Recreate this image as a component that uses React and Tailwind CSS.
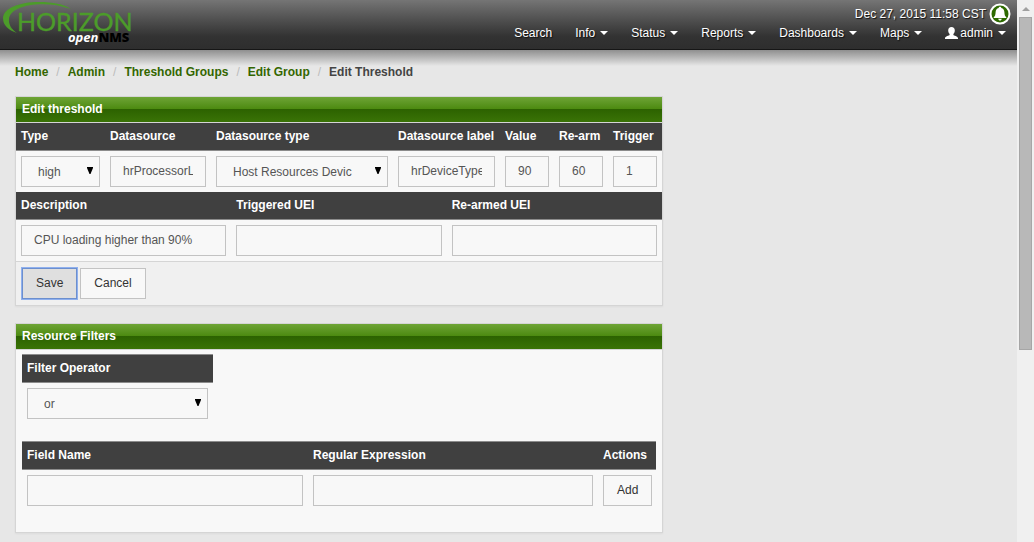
import { useState } from 'react';

const menuItems = ['Info', 'Status', 'Reports', 'Dashboards', 'Maps'];

const breadcrumbs = ['Home', 'Admin', 'Threshold Groups', 'Edit Group'];

const thClass = 'h-7 border-b border-[#8c8c8c] bg-[#404040] px-[5px] pb-px text-left font-bold whitespace-nowrap text-white';
const fieldClass = 'block h-[31px] w-full border border-[#c3c3c3] bg-[#f8f8f8] text-[#555] outline-none';
const buttonClass = 'h-[31px] border border-[#c3c3c3] bg-[#f8f8f8] px-[13px] pb-0.5 text-[#333]';

function Logo() {
  return (
    <svg width="134" height="48" viewBox="0 0 134 48" role="img" aria-label="Horizon openNMS">
      <path
        d="M17 33 C8 30 3 25 3 18 C3.5 8 20 2 39 2 C53 2 63 4 71 9 C60 5 50 3.8 39 4.2 C21 5 9.5 11 9 19 C8.5 24 11 29 17 33 Z"
        fill="#4c9c2a"
      />
      <text x="17" y="31" fontSize="25" fill="#4c9c2a" stroke="#4c9c2a" strokeWidth="0.4" fontFamily="Lato, sans-serif">
        HORIZON
      </text>
      <text x="68" y="42" fontSize="13" fontWeight="700" fontFamily="'Noto Sans', sans-serif">
        <tspan fill="#ffffff" fontStyle="italic">open</tspan>
        <tspan fill="#000000" fontWeight="900">NMS</tspan>
      </text>
    </svg>
  );
}

function Caret() {
  return (
    <svg width="8" height="4" viewBox="0 0 8 4" aria-hidden="true">
      <path d="M0 0h8L4 4z" fill="currentColor" />
    </svg>
  );
}

function BellBadge() {
  return (
    <svg width="22" height="22" viewBox="0 0 22 22" aria-hidden="true">
      <circle cx="11" cy="11" r="9.5" fill="#2d6a00" stroke="#fff" strokeWidth="2" />
      <path
        d="M11 3.8c.9 0 1.3.5 1.3 1.1 2.1.5 3 2.2 3.1 4.3.1 2.4.4 3.7 1.9 5v.9H4.7v-.9c1.5-1.3 1.8-2.6 1.9-5 .1-2.1 1-3.8 3.1-4.3 0-.6.4-1.1 1.3-1.1zM9.2 15.7h3.6c-.2 1.2-.9 1.8-1.8 1.8s-1.6-.6-1.8-1.8z"
        fill="#fff"
      />
    </svg>
  );
}

function UserIcon() {
  return (
    <svg width="13" height="12" viewBox="0 0 13 12" aria-hidden="true">
      <path
        d="M6.5 0c2.1 0 3.3 1.3 3.3 3.4 0 1.5-.6 2.7-1.4 3.5v1c.3.5 4.6 1.3 4.6 3.3V12H0v-.8c0-2 4.3-2.8 4.6-3.3v-1C3.8 6.1 3.2 4.9 3.2 3.4 3.2 1.3 4.4 0 6.5 0z"
        fill="currentColor"
      />
    </svg>
  );
}

function Header() {
  return (
    <header>
      <div className="flex h-[50px] justify-between border-b border-[#161616] bg-linear-to-b from-[#757575] via-[#323232] via-75% to-[#2e2e2e] text-white">
        <a href="#home">
          <Logo />
        </a>
        <div className="flex flex-col items-end text-shadow-[1px_1px_1px_#111]">
          <div className="flex h-[25px] items-center gap-[3px] pt-[3px] pr-1.5">
            <span>Dec 27, 2015 11:58 CST</span>
            <BellBadge />
          </div>
          <nav className="flex items-center gap-[23px] pr-[11px]">
            <a href="#search">Search</a>
            {menuItems.map((item) => (
              <a key={item} href={`#${item.toLowerCase()}`} className="flex items-center gap-[5px]">
                {item}
                <Caret />
              </a>
            ))}
            <a href="#admin" className="flex items-center gap-[5px]">
              <span className="flex items-center gap-0.5">
                <UserIcon />
                admin
              </span>
              <Caret />
            </a>
          </nav>
        </div>
      </div>
      <div className="h-4 bg-linear-to-b from-[#8f8f8f] to-[#e7e7e7]" />
    </header>
  );
}

function Breadcrumbs() {
  return (
    <ol className="flex px-[15px] leading-3 font-bold">
      {breadcrumbs.map((crumb) => (
        <li key={crumb}>
          <a href="#crumb" className="text-[#336600]">{crumb}</a>
          <span className="px-2 font-normal text-[#bbb]">/</span>
        </li>
      ))}
      <li className="text-[#444]">Edit Threshold</li>
    </ol>
  );
}

function Panel({ title, children }) {
  return (
    <section className="border border-[#d5d5d5] bg-[#f8f8f8] shadow-xs">
      <h3 className="h-[26px] border-b border-[#d5d5d5] bg-[linear-gradient(#6ea436,#4c8a10_48%,#2c6200_48%,#3a7306)] px-1.5 leading-6 font-bold text-white">
        {title}
      </h3>
      {children}
    </section>
  );
}

function SelectBox({ id, options }) {
  return (
    <div className="relative">
      <select id={id} className={`${fieldClass} appearance-none pt-px pr-5 pl-4`}>
        {options.map((option) => (
          <option key={option}>{option}</option>
        ))}
      </select>
      <svg width="6" height="7" viewBox="0 0 6 7" className="pointer-events-none absolute top-[11px] right-[7px]" aria-hidden="true">
        <path d="M0 0h6v1L3.5 7h-1L0 1z" fill="#000" />
      </svg>
    </div>
  );
}

function TextBox({ id, value = '' }) {
  const [text, setText] = useState(value);
  return (
    <input
      id={id}
      type="text"
      value={text}
      onChange={(event) => setText(event.target.value)}
      className={`${fieldClass} px-3 pb-0.5`}
    />
  );
}

function HeadCell({ id, children, className = '' }) {
  return (
    <th className={`${thClass} ${className}`}>
      <label htmlFor={id}>{children}</label>
    </th>
  );
}

function ThresholdTable() {
  return (
    <table className="w-full table-fixed border-separate border-spacing-0">
      <thead>
        <tr>
          <HeadCell id="type" className="w-[89px]">Type</HeadCell>
          <HeadCell id="datasource" className="w-[106px]">Datasource</HeadCell>
          <HeadCell id="ds-type" className="w-[182px]">Datasource type</HeadCell>
          <HeadCell id="ds-label" className="w-[107px]">Datasource label</HeadCell>
          <HeadCell id="value" className="w-[54px]">Value</HeadCell>
          <HeadCell id="rearm" className="w-[54px]">Re-arm</HeadCell>
          <HeadCell id="trigger" className="w-[54px]">Trigger</HeadCell>
        </tr>
      </thead>
      <tbody>
        <tr>
          <td className="p-[5px]"><SelectBox id="type" options={['high', 'low']} /></td>
          <td className="p-[5px]"><TextBox id="datasource" value="hrProcessorLoad" /></td>
          <td className="p-[5px]"><SelectBox id="ds-type" options={['Host Resources Devic']} /></td>
          <td className="p-[5px]"><TextBox id="ds-label" value="hrDeviceType" /></td>
          <td className="p-[5px]"><TextBox id="value" value="90" /></td>
          <td className="p-[5px]"><TextBox id="rearm" value="60" /></td>
          <td className="p-[5px]"><TextBox id="trigger" value="1" /></td>
        </tr>
      </tbody>
    </table>
  );
}

function EventTable() {
  return (
    <table className="w-full table-fixed border-separate border-spacing-0">
      <thead>
        <tr>
          <HeadCell id="description">Description</HeadCell>
          <HeadCell id="triggered-uei">Triggered UEI</HeadCell>
          <HeadCell id="rearmed-uei">Re-armed UEI</HeadCell>
        </tr>
      </thead>
      <tbody>
        <tr>
          <td className="p-[5px]"><TextBox id="description" value="CPU loading higher than 90%" /></td>
          <td className="p-[5px]"><TextBox id="triggered-uei" /></td>
          <td className="p-[5px]"><TextBox id="rearmed-uei" /></td>
        </tr>
      </tbody>
    </table>
  );
}

function FilterTables() {
  return (
    <div className="px-1.5 pt-1 pb-[21px]">
      <table className="w-[191px] border-separate border-spacing-0">
        <thead>
          <tr>
            <HeadCell id="operator" className="h-[29px] border-t">Filter Operator</HeadCell>
          </tr>
        </thead>
        <tbody>
          <tr>
            <td className="p-[5px]"><SelectBox id="operator" options={['or', 'and']} /></td>
          </tr>
        </tbody>
      </table>
      <table className="mt-[17px] w-full table-fixed border-separate border-spacing-0">
        <thead>
          <tr>
            <HeadCell id="field-name" className="h-[29px] w-[286px] border-t">Field Name</HeadCell>
            <HeadCell id="expression" className="h-[29px] w-[290px] border-t">Regular Expression</HeadCell>
            <th className={`${thClass} h-[29px] w-[58px] border-t`}>Actions</th>
          </tr>
        </thead>
        <tbody>
          <tr>
            <td className="p-[5px]"><TextBox id="field-name" /></td>
            <td className="p-[5px]"><TextBox id="expression" /></td>
            <td className="p-[5px]"><button type="button" className={`${buttonClass} block`}>Add</button></td>
          </tr>
        </tbody>
      </table>
    </div>
  );
}

function Scrollbar() {
  return (
    <div className="flex w-[17px] shrink-0 flex-col items-center bg-[#f0f0f0]" aria-hidden="true">
      <div className="flex h-[17px] items-center">
        <svg width="8" height="4" viewBox="0 0 8 4">
          <path d="M4 0l4 4H0z" fill="#a0a0a0" />
        </svg>
      </div>
      <div className="h-[333px] w-[13px] border border-[#a6a6a6] bg-[#b8b8b8]" />
    </div>
  );
}

export default function App() {
  return (
    <div className="flex min-h-screen bg-[#e7e7e7] font-['Liberation_Sans',Arial,sans-serif] text-[12px] leading-4">
      <div className="min-w-0 flex-1">
        <Header />
        <Breadcrumbs />
        <main className="flex w-2/3 flex-col gap-[17px] px-[15px] pt-[18px] pb-2.5">
          <Panel title="Edit threshold">
            <ThresholdTable />
            <EventTable />
            <div className="flex gap-[3px] border-t border-[#d5d5d5] bg-[#f0f0f0] p-1.5">
              <button type="submit" className="h-[31px] border border-[#6c8fce] bg-[#dfdfdf] px-[13px] pb-0.5 text-[#333] ring-1 ring-[#8fb0ee]">
                Save
              </button>
              <button type="button" className={buttonClass}>Cancel</button>
            </div>
          </Panel>
          <Panel title="Resource Filters">
            <FilterTables />
          </Panel>
        </main>
      </div>
      <Scrollbar />
    </div>
  );
}
